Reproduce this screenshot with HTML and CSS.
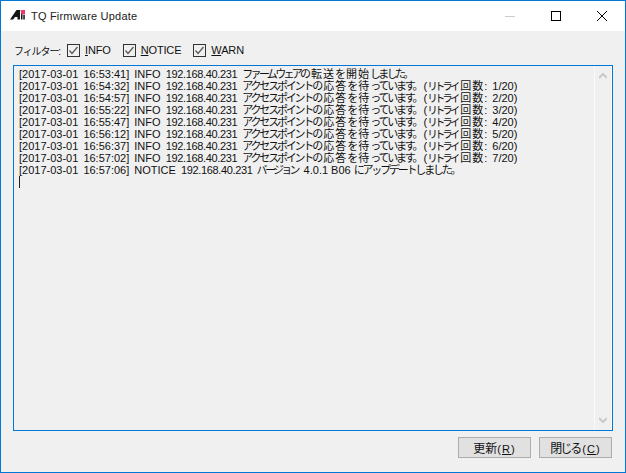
FILE: index.html
```html
<!DOCTYPE html>
<html lang="ja">
<head>
<meta charset="utf-8">
<title>TQ Firmware Update</title>
<link rel="stylesheet" href="styles.css">
</head>
<body>
<div class="window">
  <header class="titlebar">
    <svg class="app-icon" width="16" height="16" viewBox="0 0 16 16">
      <path d="M0 11.5 L6.5 2 H10 V11.5 H7.5 V9 H5 L3.2 11.5 Z" fill="#151515"/>
      <path d="M11 5 H12.5 V11.5 H11 Z M13.3 7 H14.8 V11.5 H13.3 Z" fill="#151515"/>
      <path d="M10.5 2 H15 V6.5 H11.5 Z" fill="#ea3a6a"/>
    </svg>
    <span class="title">TQ Firmware Update</span>
    <div class="controls">
      <svg class="ctl" width="46" height="30" viewBox="0 0 46 30"><path d="M18 15.5H28" stroke="#cccccc"/></svg>
      <svg class="ctl" width="46" height="30" viewBox="0 0 46 30"><rect x="18.5" y="10.5" width="9" height="9" fill="none" stroke="#000"/></svg>
      <svg class="ctl" width="46" height="30" viewBox="0 0 46 30"><path d="M18 10L28 20M28 10L18 20" stroke="#000" fill="none"/></svg>
    </div>
  </header>
  <main class="content">
    <div class="filters">
      <span class="filter-label">フィルター:</span>
      <label class="check"><svg width="13" height="13" viewBox="0 0 13 13"><rect x=".5" y=".5" width="12" height="12" fill="#f0f0f0" stroke="#333"/><path d="M2.5 6.5L5 9.5L10.5 3" fill="none" stroke="#555" stroke-width="1.2"/></svg><span><u>I</u>NFO</span></label>
      <label class="check"><svg width="13" height="13" viewBox="0 0 13 13"><rect x=".5" y=".5" width="12" height="12" fill="#f0f0f0" stroke="#333"/><path d="M2.5 6.5L5 9.5L10.5 3" fill="none" stroke="#555" stroke-width="1.2"/></svg><span><u>N</u>OTICE</span></label>
      <label class="check"><svg width="13" height="13" viewBox="0 0 13 13"><rect x=".5" y=".5" width="12" height="12" fill="#f0f0f0" stroke="#333"/><path d="M2.5 6.5L5 9.5L10.5 3" fill="none" stroke="#555" stroke-width="1.2"/></svg><span><u>W</u>ARN</span></label>
    </div>
    <section class="logbox">
      <div class="log">
        <div class="line">[2017-03-01 16:53:41] INFO <span class="ip">192.168.40.231</span> <span class="k tight">ファームウェアの</span><span class="c">転送</span><span class="k">を</span><span class="c">開始</span><span class="k tight">しました。</span></div>
        <div class="line">[2017-03-01 16:54:32] INFO <span class="ip">192.168.40.231</span> <span class="k">アクセスポイントの</span><span class="c">応答</span><span class="k">を</span><span class="c">待</span><span class="k">っています。</span>(<span class="k rt">リトライ</span><span class="c">回数</span>: 1/20)</div>
        <div class="line">[2017-03-01 16:54:57] INFO <span class="ip">192.168.40.231</span> <span class="k">アクセスポイントの</span><span class="c">応答</span><span class="k">を</span><span class="c">待</span><span class="k">っています。</span>(<span class="k rt">リトライ</span><span class="c">回数</span>: 2/20)</div>
        <div class="line">[2017-03-01 16:55:22] INFO <span class="ip">192.168.40.231</span> <span class="k">アクセスポイントの</span><span class="c">応答</span><span class="k">を</span><span class="c">待</span><span class="k">っています。</span>(<span class="k rt">リトライ</span><span class="c">回数</span>: 3/20)</div>
        <div class="line">[2017-03-01 16:55:47] INFO <span class="ip">192.168.40.231</span> <span class="k">アクセスポイントの</span><span class="c">応答</span><span class="k">を</span><span class="c">待</span><span class="k">っています。</span>(<span class="k rt">リトライ</span><span class="c">回数</span>: 4/20)</div>
        <div class="line">[2017-03-01 16:56:12] INFO <span class="ip">192.168.40.231</span> <span class="k">アクセスポイントの</span><span class="c">応答</span><span class="k">を</span><span class="c">待</span><span class="k">っています。</span>(<span class="k rt">リトライ</span><span class="c">回数</span>: 5/20)</div>
        <div class="line">[2017-03-01 16:56:37] INFO <span class="ip">192.168.40.231</span> <span class="k">アクセスポイントの</span><span class="c">応答</span><span class="k">を</span><span class="c">待</span><span class="k">っています。</span>(<span class="k rt">リトライ</span><span class="c">回数</span>: 6/20)</div>
        <div class="line">[2017-03-01 16:57:02] INFO <span class="ip">192.168.40.231</span> <span class="k">アクセスポイントの</span><span class="c">応答</span><span class="k">を</span><span class="c">待</span><span class="k">っています。</span>(<span class="k rt">リトライ</span><span class="c">回数</span>: 7/20)</div>
        <div class="line">[2017-03-01 16:57:06] NOTICE <span class="ip">192.168.40.231</span> <span class="tail"><span class="k tight">バージョン</span> 4.0.1 B06 <span class="k">にアップデートしました。</span></span></div>
        <div class="caret"></div>
      </div>
      <div class="scrollbar">
        <svg width="8" height="6" viewBox="0 0 8 6"><path d="M0 5L4 1L8 5" fill="none" stroke="#c8c8c8" stroke-width="2"/></svg>
        <svg width="8" height="6" viewBox="0 0 8 6"><path d="M0 1L4 5L8 1" fill="none" stroke="#c8c8c8" stroke-width="2"/></svg>
      </div>
    </section>
    <footer class="actions">
      <button class="btn">更新<span class="mn">(<u>R</u>)</span></button>
      <button class="btn"><span class="kana">閉じる</span><span class="mn">(<u>C</u>)</span></button>
    </footer>
  </main>
</div>
</body>
</html>
```
FILE: styles.css
```css
* { box-sizing: border-box; }
html, body { margin: 0; padding: 0; }
body {
  width: 626px;
  height: 473px;
  overflow: hidden;
  font-family: "Liberation Sans", "Noto Sans CJK JP", sans-serif;
  font-size: 11px;
  color: #111;
}
.window {
  width: 626px;
  height: 473px;
  border: 1px solid #0078d7;
  display: flex;
  flex-direction: column;
  background: #f0f0f0;
}
.titlebar {
  height: 30px;
  background: #fff;
  display: flex;
  align-items: center;
  padding-left: 9px;
  flex: none;
}
.app-icon { flex: none; }
.title { margin-left: 5px; font-size: 11px; letter-spacing: 0.2px; color: #222; }
.controls { margin-left: auto; display: flex; }
.ctl { display: block; }
.content {
  flex: 1;
  display: flex;
  flex-direction: column;
  padding: 0 12px;
  min-height: 0;
}
.filters {
  height: 34px;
  display: flex;
  align-items: center;
  flex: none;
  padding-top: 4px;
}
.filter-label { width: 54px; flex: none; font-size: 10px; letter-spacing: -1.1px; padding-left: 1px; }
.check { display: flex; align-items: center; gap: 5px; margin-right: 12px; letter-spacing: -0.15px; }
.logbox {
  height: 366px;
  border: 1px solid #0078d7;
  display: flex;
  flex: none;
}
.log {
  flex: 1;
  padding: 2px 0 0 5px;
  min-width: 0;
}
.line {
  height: 12px;
  line-height: 12px;
  white-space: nowrap;
  word-spacing: 2px;
}
.ip { letter-spacing: -0.35px; }
.k { display: inline-block; letter-spacing: -2.2px; padding-right: 2.2px; }
.k.tight { letter-spacing: -2.7px; padding-right: 2.7px; }
.k.rt { letter-spacing: -3px; padding-right: 3px; font-size: 10.5px; }
.c { letter-spacing: 1px; }
.tail { word-spacing: 0; margin-left: -1px; }
.caret { width: 1px; height: 12px; background: #222; }
.scrollbar {
  width: 18px;
  border-left: 1px solid #fafafa;
  border-right: 1px solid #fafafa;
  display: flex;
  flex-direction: column;
  justify-content: space-between;
  align-items: center;
  padding: 7px 0;
}
.actions {
  display: flex;
  justify-content: flex-end;
  gap: 8px;
  padding: 6px 1px 0 0;
}
.btn {
  width: 73px;
  height: 21px;
  border: 1px solid #adadad;
  background: #e1e1e1;
  font: inherit;
  font-size: 12px;
  color: #111;
  padding: 0;
}
.mn { font-size: 11px; letter-spacing: 1px; }
.kana { letter-spacing: -2px; margin-right: 2px; }
```
